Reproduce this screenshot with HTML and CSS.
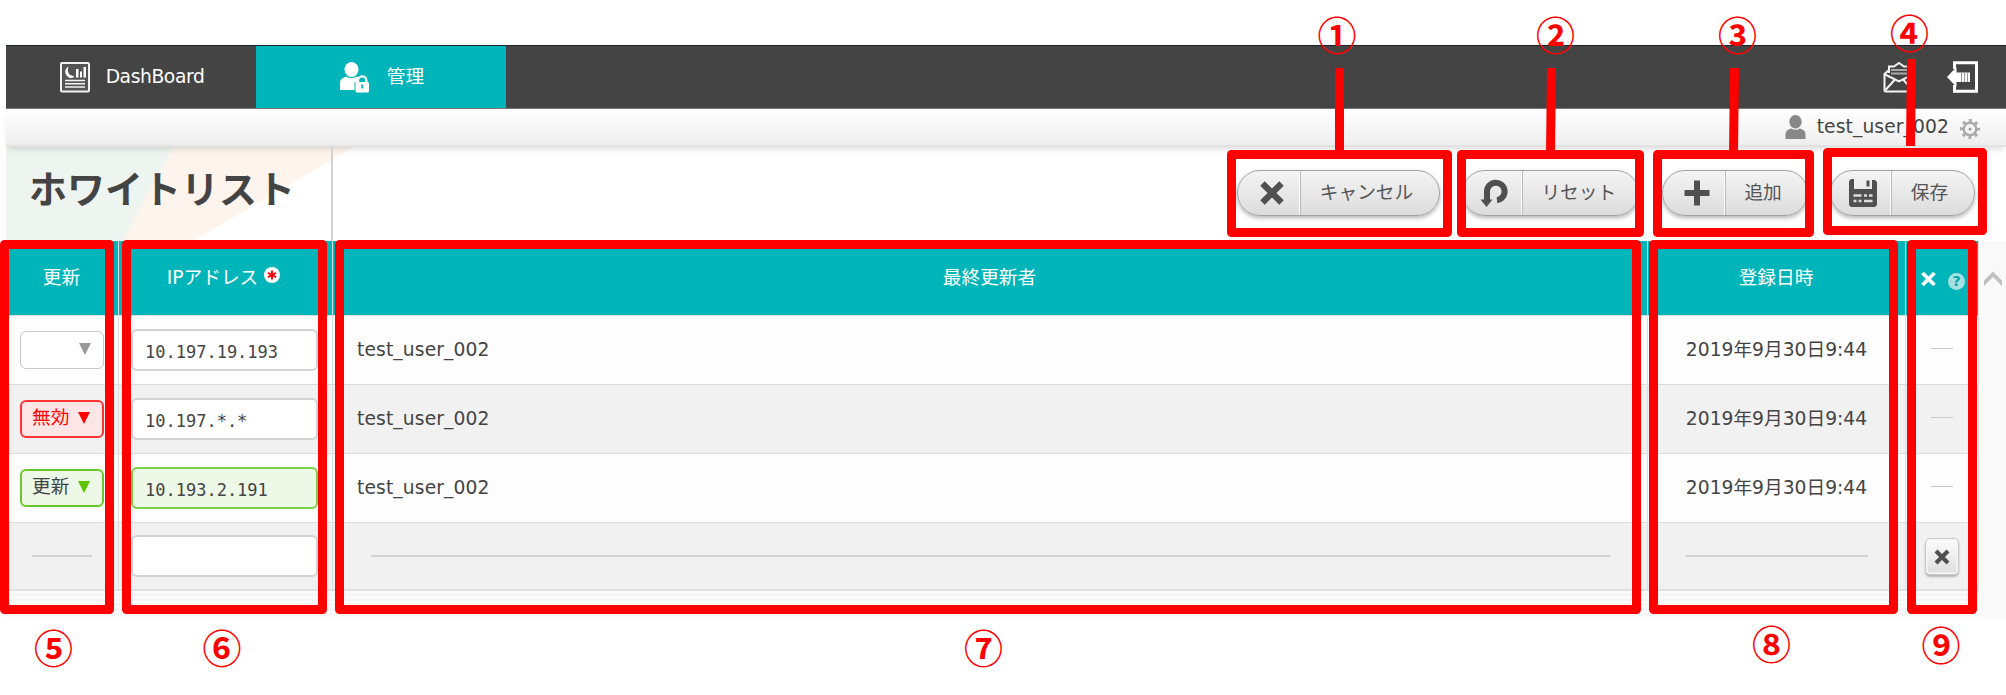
FILE: index.html
```html
<!DOCTYPE html>
<html lang="ja">
<head>
<meta charset="utf-8">
<title>ホワイトリスト</title>
<link rel="stylesheet" href="styles.css">
</head>
<body>
<div class="app">
  <nav class="nav">
    <a class="tab tab-dashboard">
      <svg class="tab-icon" width="30" height="31" viewBox="0 0 30 31"><rect x="1" y="1" width="28" height="28.5" rx="1" fill="#555" stroke="#f2f2f2" stroke-width="2"/><path d="M8 5a5 5.500 0 1 0 6 9.500a6.500 6.500 0 0 1-6-9.500Z" fill="#fff" stroke="#fff"/><path d="M16 7h2.500v8.500H16zM20 9.500h2v6h-2zM23.500 5H26v10.500h-2.500z" fill="#fff"/><path d="M5 18.500h20M5 21.800h20M5 25h20" stroke="#f2f2f2" stroke-width="1.500"/></svg>
      <span>DashBoard</span>
    </a>
    <a class="tab tab-active">
      <svg class="tab-icon" width="30" height="31" viewBox="0 0 30 31"><ellipse cx="11.500" cy="7.500" rx="7" ry="7.500" fill="#fff"/><path d="M0 28V20.500q0-4 6-6q5 3.500 11 0l2.500 1.500q-3 2-3 4.500h-2V28Z" fill="#fff"/><path d="M18 21v-2.500a4.200 4.200 0 0 1 8.400 0V21" fill="none" stroke="#fff" stroke-width="2.200"/><rect x="15.500" y="20" width="13.500" height="10.500" rx="1.500" fill="#fff"/><path d="M22.200 22.500v4" stroke="#00b5b9" stroke-width="1.800"/></svg>
      <span>管理</span>
    </a>
    <div class="nav-tools">
      <svg width="32" height="31" viewBox="0 0 32 31" fill="none" stroke="#f4f4f4" stroke-width="2"><path d="M6 11V4.500h5L16 1l5 3.500h5V11M6 8L1.500 12v16q0 1.500 1.500 1.500h26q1.500 0 1.500-1.500V12L26 8"/><path d="M8 8h16M8 11.500h16" stroke="#aaa"/><path d="M2 12.500l14 7 14-7M2.500 28l9-10M29.500 28l-9-10"/></svg>
      <svg width="32" height="32" viewBox="0 0 32 32"><path d="M7.500 8V1.700h22v28.500h-22V24" fill="none" stroke="#fff" stroke-width="3"/><path d="M0 16L9.500 6v5.500H23v9.500H9.500v5Z" fill="#fff"/><path d="M14.500 12v9M17.500 12v9M20.500 12v9" stroke="#999" stroke-width="1"/></svg>
    </div>
  </nav>
  <div class="userbar">
    <svg width="21" height="24" viewBox="0 0 21 24" fill="#888"><ellipse cx="10.500" cy="6.700" rx="6.200" ry="6.700"/><path d="M.5 24v-5q0-4 5.500-5.500q4.500 2.500 9 0q5.500 1.500 5.500 5.500v5Z"/></svg>
    <span class="user-name">test_user_002</span>
    <svg class="gear" width="20" height="20" viewBox="0 0 20 20" fill="none" stroke="#aaa"><circle cx="10" cy="10" r="6.300" stroke-width="2.400"/><circle cx="10" cy="10" r="8.500" stroke-width="3" stroke-dasharray="3 3.675" stroke-dashoffset="1.500"/><circle cx="10" cy="10" r="1.500" fill="#999" stroke="none"/></svg>
  </div>
  <header class="head">
    <h1 class="title">ホワイトリスト</h1>
    <div class="actions">
      <button class="pill pill-cancel"><span class="pill-icon"><svg width="26" height="26" viewBox="0 0 26 26"><path d="M3.500 3.500l19 19M22.500 3.500l-19 19" stroke="#505050" stroke-width="6.300"/></svg></span><span class="pill-label">キャンセル</span></button>
      <button class="pill pill-reset"><span class="pill-icon"><svg width="30" height="28" viewBox="0 0 30 28"><path d="M8 21v-8.500a8.800 8.800 0 1 1 10 8.700" fill="none" stroke="#505050" stroke-width="6"/><path d="M1.500 20.500h12L7.500 28Z" fill="#505050"/></svg></span><span class="pill-label">リセット</span></button>
      <button class="pill pill-add"><span class="pill-icon"><svg width="26" height="26" viewBox="0 0 26 26"><path d="M13 .5v25M.5 13h25" stroke="#505050" stroke-width="6"/></svg></span><span class="pill-label">追加</span></button>
      <button class="pill pill-save"><span class="pill-icon"><svg width="28" height="28" viewBox="0 0 28 28"><path d="M2 0h3v10h18V1h3l2 2v23l-2 2H2l-2-2V2Z" fill="#505050"/><path d="M17.500 1.500h3v6h-3z" fill="#505050"/><path d="M4.500 16.500h8M15 16.500h3M20 16.500h3.500M4.500 22h3M9.500 22h3M15 22h8.500" stroke="#ddd" stroke-width="2.500"/></svg></span><span class="pill-label">保存</span></button>
    </div>
  </header>
  <div class="body">
    <div class="table">
      <div class="row row-head">
        <div class="cell">更新</div>
        <div class="cell cell-ip-head">IPアドレス<svg width="16" height="16" viewBox="0 0 16 16"><circle cx="8" cy="8" r="8" fill="#fff"/><path d="M8 3.500v9M4 5.800l8 4.400M12 5.800l-8 4.400" stroke="#f00" stroke-width="1.900"/></svg></div>
        <div class="cell">最終更新者</div>
        <div class="cell">登録日時</div>
        <div class="cell cell-del-head"><svg width="15" height="14" viewBox="0 0 15 14"><path d="M1.500 1l12 12M13.500 1l-12 12" stroke="#fff" stroke-width="3.600"/></svg><span class="help">?</span></div>
      </div>
      <div class="row">
        <div class="cell"><div class="select"><span></span><i class="arrow"></i></div></div>
        <div class="cell"><div class="input">10.197.19.193</div></div>
        <div class="cell cell-user">test_user_002</div>
        <div class="cell">2019年9月30日9:44</div>
        <div class="cell"><hr class="dash dash-small"></div>
      </div>
      <div class="row row-alt">
        <div class="cell"><div class="select select-off"><span>無効</span><i class="arrow"></i></div></div>
        <div class="cell"><div class="input">10.197.*.*</div></div>
        <div class="cell cell-user">test_user_002</div>
        <div class="cell">2019年9月30日9:44</div>
        <div class="cell"><hr class="dash dash-small"></div>
      </div>
      <div class="row">
        <div class="cell"><div class="select select-edit"><span>更新</span><i class="arrow"></i></div></div>
        <div class="cell"><div class="input input-edit">10.193.2.191</div></div>
        <div class="cell cell-user">test_user_002</div>
        <div class="cell">2019年9月30日9:44</div>
        <div class="cell"><hr class="dash dash-small"></div>
      </div>
      <div class="row row-alt row-new">
        <div class="cell"><hr class="dash dash-state"></div>
        <div class="cell"><div class="input"></div></div>
        <div class="cell"><hr class="dash dash-user"></div>
        <div class="cell"><hr class="dash dash-date"></div>
        <div class="cell"><button class="remove"><svg width="16" height="16" viewBox="0 0 16 16"><path d="M2 2l12 12M14 2L2 14" stroke="#505050" stroke-width="4.200"/></svg></button></div>
      </div>
      <div class="filler"></div>
    </div>
    <div class="scroll"><svg width="18" height="15" viewBox="0 0 18 15"><path d="M0 9.500L9 .5l9 9V15L9 6 0 15Z" fill="#c1c1c1"/></svg></div>
  </div>
</div>

<svg class="callouts" width="2006" height="695" viewBox="0 0 2006 695">
  <g class="frames">
    <rect x="1231.500" y="154.500" width="216" height="78"/>
    <rect x="1461.500" y="154.500" width="178" height="78"/>
    <rect x="1657.500" y="154.500" width="152" height="78"/>
    <rect x="1827.500" y="152.500" width="155" height="78"/>
    <rect x="4.500" y="244.500" width="105" height="365"/>
    <rect x="126.500" y="244.500" width="196" height="365"/>
    <rect x="339.500" y="244.500" width="1297" height="365"/>
    <rect x="1653.500" y="244.500" width="240" height="365"/>
    <rect x="1911.500" y="244.500" width="61" height="365"/>
    <path d="M1339.500 68v86M1551.500 68L1550.500 154M1734.500 68L1733.500 154M1911.500 59L1910.500 146"/>
  </g>
  <g class="numbers">
    <text x="1337" y="50">①</text>
    <text x="1555.500" y="49.500">②</text>
    <text x="1737.500" y="49.500">③</text>
    <text x="1909.500" y="47.500">④</text>
    <text x="53.500" y="662.500">⑤</text>
    <text x="222" y="662.500">⑥</text>
    <text x="983.500" y="662.500">⑦</text>
    <text x="1771.500" y="658.500">⑧</text>
    <text x="1941" y="659.500">⑨</text>
  </g>
</svg>
</body>
</html>
```
FILE: styles.css
```css
* { box-sizing: border-box; }

body {
  margin: 0;
  width: 2006px;
  height: 695px;
  overflow: hidden;
  position: relative;
  background: #fff;
  color: #444;
  font-family: "DejaVu Sans", "Noto Sans CJK JP", sans-serif;
  font-size: 18.7px;
  line-height: 28px;
}

button { font: inherit; padding: 0; }

.app { padding: 45px 0 0 6px; }

/* Navigation */
.nav {
  display: flex;
  height: 64px;
  background: #444;
  border-top: 1px solid #1c232c;
  border-bottom: 1px solid #777;
}
.tab {
  display: flex;
  align-items: center;
  justify-content: center;
  gap: 17px;
  width: 250px;
  color: #fff;
}
.tab-dashboard { gap: 16px; padding-left: 2px; letter-spacing: -.4px; }
.tab-active { background: #00b5b9; padding-left: 2px; }
.nav-tools {
  display: flex;
  gap: 32px;
  align-items: center;
  margin-left: auto;
  padding-right: 27px;
}

.userbar {
  position: relative;
  display: flex;
  align-items: center;
  justify-content: flex-end;
  gap: 11px;
  height: 38px;
  padding: 0 26px 0 0;
  background: linear-gradient(#fff, #eee);
  border-bottom: 2px solid #e2e2e2;
  box-shadow: 0 4px 6px -2px rgba(0, 0, 0, .14);
}
.user-name { letter-spacing: .1px; }
.gear { margin-top: 3px; }

/* Page head */
.head { display: flex; height: 94px; position: relative; }
.head::before,
.head::after {
  content: "";
  position: absolute;
  z-index: -1;
  inset: 0 auto 0 0;
  width: 350px;
}
.head::before { background: #eef4f0; clip-path: polygon(0 0, 170px 0, 140px 50px, 118px 100%, 0 100%); }
.head::after { background: #fcf4ed; clip-path: polygon(168px 0, 348px 0, 187px 100%, 117px 100%, 139px 50px); }
.title {
  width: 327px;
  margin: 0;
  padding: 15px 0 0 23px;
  border-right: 2px solid #d2d2d2;
  font-size: 38px;
  line-height: 56px;
  font-weight: 700;
  white-space: nowrap;
}
.actions { display: flex; padding: 23px 0 0 904px; gap: 22.300px; }
.pill {
  display: flex;
  height: 46px;
  border: 1.500px solid #a3a3a3;
  border-radius: 23px;
  background: linear-gradient(#f4f4f4, #dcdcdc);
  box-shadow: 0 2px 4px rgba(0, 0, 0, .3);
  color: #555;
  overflow: hidden;
}
.pill-icon {
  display: flex;
  align-items: center;
  justify-content: center;
  align-self: stretch;
  flex: none;
  border-right: 1px solid #bbb;
  box-shadow: inset -1px 0 #fff;
}
.pill-label { flex: 1; align-self: center; text-align: center; white-space: nowrap; }
.pill-cancel { width: 203px; }
.pill-cancel .pill-icon { width: 63px; padding-left: 6px; }
.pill-cancel .pill-label { padding-right: 7px; }
.pill-reset { width: 177px; }
.pill-reset .pill-icon { width: 60px; padding-left: 2px; }
.pill-reset .pill-label { padding-right: 4px; }
.pill-add { width: 146px; }
.pill-add .pill-icon { width: 63px; padding-left: 7px; }
.pill-add .pill-label { padding-right: 6px; }
.pill-save { width: 145px; }
.pill-save .pill-icon { width: 61px; padding-left: 4px; }
.pill-save .pill-label { padding-right: 7px; }

/* Table */
.body { display: flex; height: 378px; background: #f9f9f9; }
.table { width: 1973px; }
.row {
  display: grid;
  grid-template-columns: 113px 214px 1315px 258px 73px;
  height: 69px;
  background: #fdfdfd;
  border-bottom: 1px solid #dcdcdc;
}
.row-alt { background: #f1f1f1; }
.row-head { height: 75px; background: #00b5b9; color: #fff; }
.row-new { height: 68px; border-bottom: 2px solid #e0e0e0; }
.cell {
  display: flex;
  align-items: center;
  justify-content: center;
  padding-bottom: 1px;
  border-right: 1px solid #dcdcdc;
}
.row-head .cell { padding: 0 1px 1px 0; }
.row-head .cell.cell-ip-head { gap: 6px; padding-right: 4px; }
.cell-ip-head svg { margin-bottom: 5px; }
.cell-del-head { gap: 12px; }
.row-head .cell.cell-del-head { padding: 2px 0 0 2px; }
.help {
  width: 17px;
  height: 17px;
  margin-top: 4px;
  border-radius: 50%;
  background: #a6e1e2;
  color: #00a5aa;
  font-size: 14px;
  font-weight: 700;
  line-height: 17px;
  text-align: center;
}
.cell.cell-user { justify-content: flex-start; padding-left: 24px; letter-spacing: .12px; }

.select {
  display: flex;
  align-items: center;
  justify-content: space-between;
  width: 84px;
  height: 38px;
  margin-top: 1px;
  padding: 0 12px 3px 10px;
  border: 1.500px solid #c8c8c8;
  border-radius: 6px;
  background: #fff;
}
.arrow {
  width: 12px;
  height: 12px;
  margin-top: 1px;
  background: #999;
  clip-path: polygon(0 0, 100% 0, 50% 100%);
}
.select-off { border: 2px solid #f33; background: #ffe6e6; color: #f00; }
.select-off .arrow { background: #f00; }
.select-edit { border: 2px solid #68c82c; background: #edf8e6; }
.select-edit .arrow { background: #5cc400; }

.input {
  width: 187px;
  height: 42px;
  margin-right: 2px;
  padding: 0 13px 0 12px;
  border: 2px solid #d2d2d2;
  border-radius: 6px;
  background: #fff;
  font-family: "DejaVu Sans Mono", monospace;
  font-size: 17px;
  line-height: 42px;
}
.input-edit { border-color: #7cd048; background: #edf8e6; }

.dash { margin: 0; border: 0; height: 2px; background: #d2d2d2; }
.dash-small { width: 22px; height: 1px; margin-bottom: 2px; background: #c8c8c8; }
.dash-state { width: 60px; }
.dash-user { width: 1239px; }
.dash-date { width: 182px; }

.remove {
  display: flex;
  align-items: center;
  justify-content: center;
  width: 34px;
  height: 37px;
  margin-top: 2px;
  border: 1.500px solid #c8c8c8;
  border-radius: 5px;
  background: linear-gradient(#fdfdfd, #ddd);
  box-shadow: inset 0 0 0 1.500px #f6f6f6, 0 2px 2px rgba(0, 0, 0, .25);
}
.filler {
  height: 27px;
  background: repeating-linear-gradient(#fcfcfc 0 2px, #f6f6f6 2px 5px);
}
.scroll { flex: 1; padding: 25px 0 0 5px; }

/* Numbered callouts drawn over the screen */
.callouts { position: absolute; left: 0; top: 0; }
.frames { fill: none; stroke: #f00; stroke-width: 9; stroke-linejoin: round; }
.numbers {
  fill: #f00;
  font-family: "Noto Sans CJK JP", sans-serif;
  font-size: 39px;
  font-weight: 700;
  text-anchor: middle;
}
```
